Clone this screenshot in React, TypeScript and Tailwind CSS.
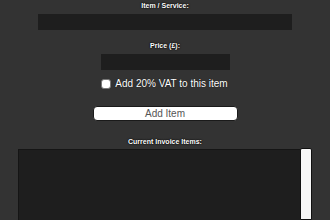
export default function App() {
    return (
        <div className="w-[330px] h-[220px] overflow-hidden bg-[#333333] flex flex-col items-center font-['Liberation_Sans',Arial,sans-serif] text-white">
            {/* Item */}
            <label className="mt-[1px] text-[7px] font-bold leading-[10px] [text-shadow:0_0_1px_#000,0_0_2px_#000]">Item / Service:</label>
            <div className="mt-[3px] w-[254px] h-[16px] bg-[#1e1e1e]" />

            {/* Price */}
            <label className="mt-[11px] text-[7px] font-bold leading-[10px] [text-shadow:0_0_1px_#000,0_0_2px_#000]">Price (£):</label>
            <div className="mt-[3px] w-[129px] h-[16px] bg-[#1e1e1e]" />

            {/* VAT */}
            <div className="mt-[8px] h-[12px] flex items-center gap-[4px] pr-[1px]">
                <div className="w-[10px] h-[10px] rounded-[3px] bg-white border border-[#777]" />
                <span className="text-[10px] leading-[12px] [text-shadow:0_0_1px_#000]">Add 20% VAT to this item</span>
            </div>

            {/* Button */}
            <button className="mt-[16px] w-[145px] h-[15px] rounded-[4px] bg-white border border-[#1a1a1a] text-[#555] text-[10px] leading-[13px]">
                Add Item
            </button>

            {/* List */}
            <label className="mt-[16px] text-[7px] font-bold leading-[10px] [text-shadow:0_0_1px_#000,0_0_2px_#000]">Current Invoice Items:</label>
            <div className="mt-[1px] w-[294px] flex-1 flex">
                <div className="flex-1 mt-[1px] bg-[#1e1e1e] border-t border-l border-[#151515]" />
                <div className="w-[12px] bg-[#f7f7f7] border border-[#111] rounded-t-[2px]" />
            </div>
        </div>
    );
}
